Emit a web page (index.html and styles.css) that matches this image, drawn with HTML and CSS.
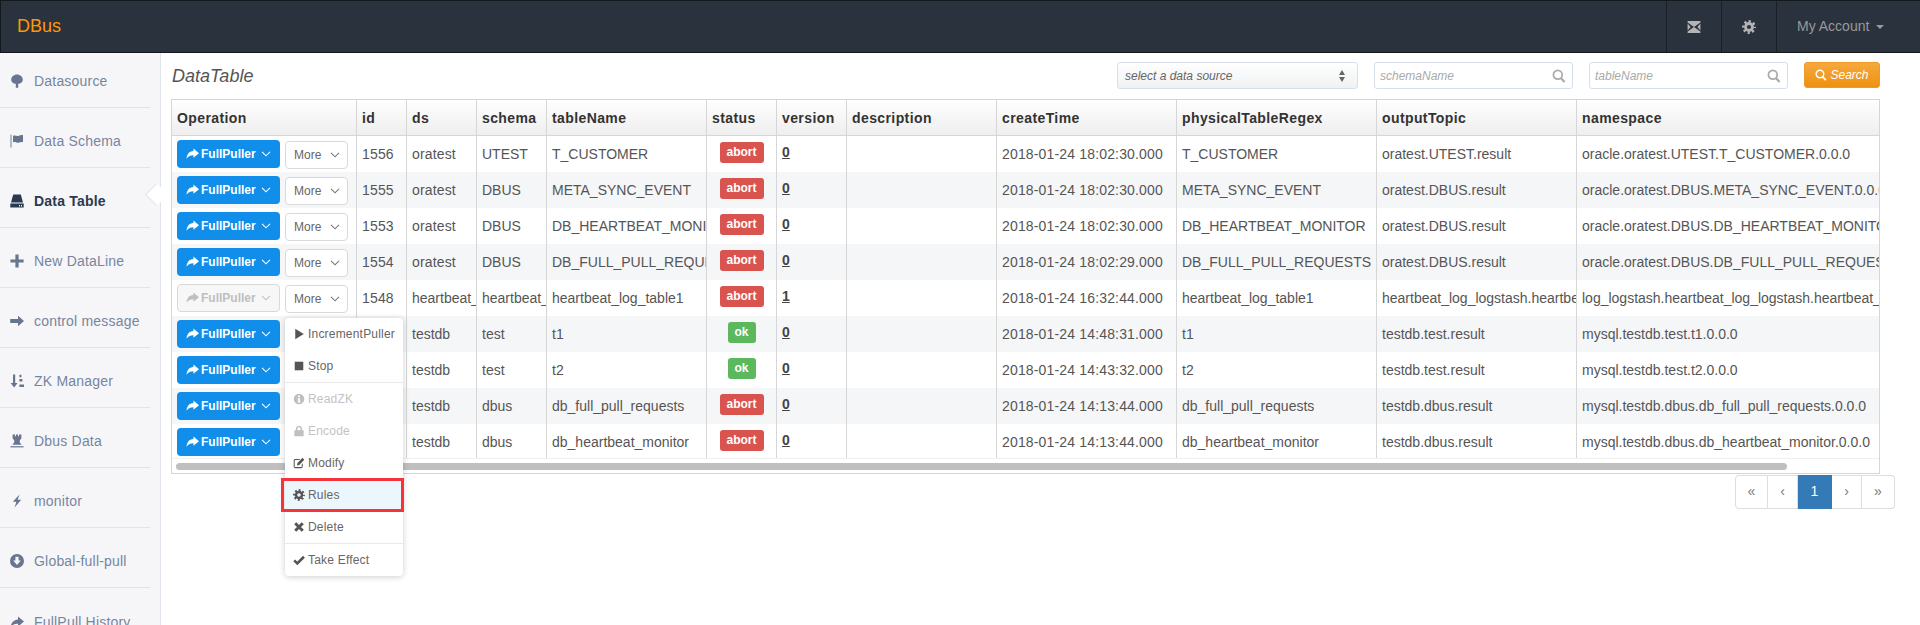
FILE: index.html
```html
<!DOCTYPE html>
<html lang="en">
<head>
<meta charset="utf-8">
<title>DBus - DataTable</title>
<link rel="stylesheet" href="styles.css">
</head>
<body>
<svg class="defs" xmlns="http://www.w3.org/2000/svg">
  <symbol id="i-tree" viewBox="0 0 14 14"><path d="M7 .4C10.2 .4 12.8 2.8 12.8 5.8 12.8 8.3 10.2 9.8 8.2 9.8V13.8H5.8V9.8C3.8 9.8 1.2 8.3 1.2 5.8 1.2 2.8 3.8 .4 7 .4Z"/></symbol>
  <symbol id="i-flag" viewBox="0 0 14 14"><rect x=".4" y=".6" width="1.2" height="13" opacity=".75"/><path d="M3 1.8C5 .6 7 2.6 9 1.8 10.5 1.2 11.5 1.1 13 1.1V8C10.8 8 8.5 9.2 6.5 8.4 5 7.8 4 7.9 3 8.4Z"/></symbol>
  <symbol id="i-hdd" viewBox="0 0 14 14"><path d="M3.2 .6H10.8L13 8.6H1Z"/><path fill-rule="evenodd" d="M.3 9.6H13.7V13.6H.3ZM9 11V12.4H10V11ZM11 11V12.4H12V11Z"/></symbol>
  <symbol id="i-plus" viewBox="0 0 14 14"><path d="M5.4.6H8.6V5.4H13.6V8.6H8.6V13.6H5.4V8.6H.4V5.4H5.4Z"/></symbol>
  <symbol id="i-arrow" viewBox="0 0 14 14"><path d="M8 1.8 14 7 8 12.2V9H.2V5H8Z"/></symbol>
  <symbol id="i-sort" viewBox="0 0 14 14"><path d="M3 .6H5.2V9H7.6L4.1 13.6.6 9H3Z"/><path d="M9.4 .8H11.4V3.2H9.4ZM9.4 5H12.4V7.4H9.4ZM9.4 10.4H14V13H9.4Z"/></symbol>
  <symbol id="i-tower" viewBox="0 0 14 14"><path d="M2.6.4H5V2.2H6V.4H8V2.2H9V.4H11.4V4.6L9.8 6.2V8.6L11.6 10.8H2.4L4.2 8.6V6.2L2.6 4.6Z"/><rect x=".4" y="12.2" width="13.2" height="1.2"/></symbol>
  <symbol id="i-flash" viewBox="0 0 14 14"><path d="M9.6.4 2.8 7.8H6.4L4.6 13.6 11.2 5.8H7.6Z"/></symbol>
  <symbol id="i-download" viewBox="0 0 14 14"><path fill-rule="evenodd" d="M7 0A7 7 0 1 0 7 14 7 7 0 0 0 7 0ZM5.4 2.8H8.6V6.6H10.8L7 11 3.2 6.6H5.4Z"/></symbol>
  <symbol id="i-share" viewBox="0 0 14 14"><path d="M8 1.6 14 6.6 8 11.6V8.8C5 8.8 2.6 9.4 .6 12.6 .8 8 3.4 4.6 8 4.4Z"/></symbol>
  <symbol id="i-mail" viewBox="0 0 14 14"><path d="M.6 1H13.4V2.4L7 7 .6 2.4ZM.6 13H13.4V11.6L7 7 .6 11.6Z"/><path d="M.6 3.4 3.6 6.9.6 10.6ZM13.4 3.4 10.4 6.9 13.4 10.6Z"/></symbol>
  <symbol id="i-cog" viewBox="0 0 14 14"><circle cx="7" cy="7" r="3.5" fill="none" stroke="currentColor" stroke-width="2.8"/><circle cx="7" cy="7" r="5.7" fill="none" stroke="currentColor" stroke-width="2.4" stroke-dasharray="2.24 2.24" stroke-dashoffset="1.1"/></symbol>
  <symbol id="i-play" viewBox="0 0 14 14"><path d="M2.6 1 12.6 7 2.6 13Z"/></symbol>
  <symbol id="i-stop" viewBox="0 0 14 14"><rect x="2" y="2" width="10" height="10"/></symbol>
  <symbol id="i-info" viewBox="0 0 14 14"><path fill-rule="evenodd" d="M7 .8A6.2 6.2 0 1 0 7 13.2 6.2 6.2 0 0 0 7 .8ZM5.9 3H8.1V5H5.9ZM5.4 6H8.1V9.8H8.8V11H5.4V9.8H6.1V7.2H5.4Z"/></symbol>
  <symbol id="i-lock" viewBox="0 0 14 14"><path fill-rule="evenodd" d="M7 .8C9.2 .8 10.6 2.4 10.6 4.6V6H12.4V13.2H1.6V6H3.4V4.6C3.4 2.4 4.8 .8 7 .8ZM5.2 6H8.8V4.6C8.8 3.4 8.1 2.6 7 2.6 5.9 2.6 5.2 3.4 5.2 4.6Z"/></symbol>
  <symbol id="i-edit" viewBox="0 0 14 14"><path d="M2.6 2.4H8.4L7.2 3.6H2.8C2.3 3.6 2 3.9 2 4.4V11C2 11.5 2.3 11.8 2.8 11.8H9.4C9.9 11.8 10.2 11.5 10.2 11V8.4L11.4 7.2V11.2C11.4 12.2 10.6 13 9.6 13H2.6C1.6 13 .8 12.2 .8 11.2V4.2C.8 3.2 1.6 2.4 2.6 2.4Z"/><path d="M11 1 13.2 3.2 7.4 9.2 4.6 9.8 5.2 7Z"/></symbol>
  <symbol id="i-remove" viewBox="0 0 14 14"><path d="M2.6 2.6 11.4 11.4M11.4 2.6 2.6 11.4" fill="none" stroke="currentColor" stroke-width="3.4"/></symbol>
  <symbol id="i-ok" viewBox="0 0 14 14"><path d="M1.4 7.4 5 11 12.8 3.2" fill="none" stroke="currentColor" stroke-width="3"/></symbol>
  <symbol id="i-search" viewBox="0 0 14 14"><circle cx="5.8" cy="5.8" r="4.4" fill="none" stroke="currentColor" stroke-width="1.7"/><path d="M8.8 9 12.6 13" fill="none" stroke="currentColor" stroke-width="2.2"/></symbol>
  <symbol id="i-down" viewBox="0 0 10 6"><path d="M1 .8 5 4.8 9 .8" fill="none" stroke="currentColor" stroke-width="1.1"/></symbol>
</svg>

<header class="topbar">
  <a class="brand">DBus</a>
  <div class="topbar-right">
    <div class="top-btn"><svg class="ic-14"><use href="#i-mail"/></svg></div>
    <div class="top-btn"><svg class="ic-14"><use href="#i-cog"/></svg></div>
    <div class="top-account">My Account <span class="caret"></span></div>
  </div>
</header>

<div class="page">
  <nav class="sidebar">
    <a class="nav-item"><svg class="nav-ic"><use href="#i-tree"/></svg>Datasource</a>
    <a class="nav-item"><svg class="nav-ic"><use href="#i-flag"/></svg>Data Schema</a>
    <a class="nav-item active"><svg class="nav-ic"><use href="#i-hdd"/></svg>Data Table</a>
    <a class="nav-item"><svg class="nav-ic"><use href="#i-plus"/></svg>New DataLine</a>
    <a class="nav-item"><svg class="nav-ic"><use href="#i-arrow"/></svg>control message</a>
    <a class="nav-item"><svg class="nav-ic"><use href="#i-sort"/></svg>ZK Manager</a>
    <a class="nav-item"><svg class="nav-ic"><use href="#i-tower"/></svg>Dbus Data</a>
    <a class="nav-item"><svg class="nav-ic"><use href="#i-flash"/></svg>monitor</a>
    <a class="nav-item"><svg class="nav-ic"><use href="#i-download"/></svg>Global-full-pull</a>
    <a class="nav-item"><svg class="nav-ic"><use href="#i-share"/></svg>FullPull History</a>
  </nav>

  <main class="main">
    <div class="toolbar">
      <h1 class="title">DataTable</h1>
      <div class="filters">
        <div class="select-box">
          <span>select a data source</span>
          <span class="updown"><i class="tri-up"></i><i class="tri-down"></i></span>
        </div>
        <label class="search-box"><input type="text" placeholder="schemaName"><svg class="ic-14"><use href="#i-search"/></svg></label>
        <label class="search-box"><input type="text" placeholder="tableName"><svg class="ic-14"><use href="#i-search"/></svg></label>
        <button class="search-btn"><svg class="ic-12"><use href="#i-search"/></svg>Search</button>
      </div>
    </div>

    <section class="table-wrap">
      <div class="table-clip">
        <table class="grid">
          <colgroup>
            <col class="c-op"><col class="c-id"><col class="c-ds"><col class="c-ds"><col class="c-name"><col class="c-ds"><col class="c-ds"><col class="c-desc"><col class="c-time"><col class="c-wide"><col class="c-wide"><col class="c-ns">
          </colgroup>
          <thead>
            <tr><th>Operation</th><th>id</th><th>ds</th><th>schema</th><th>tableName</th><th>status</th><th>version</th><th>description</th><th>createTime</th><th>physicalTableRegex</th><th>outputTopic</th><th>namespace</th></tr>
          </thead>
          <tbody>
            <tr>
              <td><div class="ops"><button class="pull"><svg class="ic-13"><use href="#i-share"/></svg>FullPuller<svg class="chev"><use href="#i-down"/></svg></button><button class="more">More<svg class="chev"><use href="#i-down"/></svg></button></div></td>
              <td class="num">1556</td><td class="num">oratest</td><td>UTEST</td><td>T_CUSTOMER</td><td class="st"><span class="badge abort">abort</span></td><td class="ver"><a>0</a></td><td></td><td class="num">2018-01-24 18:02:30.000</td><td>T_CUSTOMER</td><td>oratest.UTEST.result</td><td>oracle.oratest.UTEST.T_CUSTOMER.0.0.0</td>
            </tr>
            <tr>
              <td><div class="ops"><button class="pull"><svg class="ic-13"><use href="#i-share"/></svg>FullPuller<svg class="chev"><use href="#i-down"/></svg></button><button class="more">More<svg class="chev"><use href="#i-down"/></svg></button></div></td>
              <td class="num">1555</td><td class="num">oratest</td><td>DBUS</td><td>META_SYNC_EVENT</td><td class="st"><span class="badge abort">abort</span></td><td class="ver"><a>0</a></td><td></td><td class="num">2018-01-24 18:02:30.000</td><td>META_SYNC_EVENT</td><td>oratest.DBUS.result</td><td>oracle.oratest.DBUS.META_SYNC_EVENT.0.0.0</td>
            </tr>
            <tr>
              <td><div class="ops"><button class="pull"><svg class="ic-13"><use href="#i-share"/></svg>FullPuller<svg class="chev"><use href="#i-down"/></svg></button><button class="more">More<svg class="chev"><use href="#i-down"/></svg></button></div></td>
              <td class="num">1553</td><td class="num">oratest</td><td>DBUS</td><td>DB_HEARTBEAT_MONITOR</td><td class="st"><span class="badge abort">abort</span></td><td class="ver"><a>0</a></td><td></td><td class="num">2018-01-24 18:02:30.000</td><td>DB_HEARTBEAT_MONITOR</td><td>oratest.DBUS.result</td><td>oracle.oratest.DBUS.DB_HEARTBEAT_MONITOR.0.0.0</td>
            </tr>
            <tr>
              <td><div class="ops"><button class="pull"><svg class="ic-13"><use href="#i-share"/></svg>FullPuller<svg class="chev"><use href="#i-down"/></svg></button><button class="more">More<svg class="chev"><use href="#i-down"/></svg></button></div></td>
              <td class="num">1554</td><td class="num">oratest</td><td>DBUS</td><td>DB_FULL_PULL_REQUESTS</td><td class="st"><span class="badge abort">abort</span></td><td class="ver"><a>0</a></td><td></td><td class="num">2018-01-24 18:02:29.000</td><td>DB_FULL_PULL_REQUESTS</td><td>oratest.DBUS.result</td><td>oracle.oratest.DBUS.DB_FULL_PULL_REQUESTS.0.0.0</td>
            </tr>
            <tr>
              <td><div class="ops"><button class="pull disabled"><svg class="ic-13"><use href="#i-share"/></svg>FullPuller<svg class="chev"><use href="#i-down"/></svg></button><button class="more">More<svg class="chev"><use href="#i-down"/></svg></button></div></td>
              <td class="num">1548</td><td>heartbeat_log</td><td>heartbeat_log</td><td>heartbeat_log_table1</td><td class="st"><span class="badge abort">abort</span></td><td class="ver"><a>1</a></td><td></td><td class="num">2018-01-24 16:32:44.000</td><td>heartbeat_log_table1</td><td>heartbeat_log_logstash.heartbeat_log_logstash.result</td><td>log_logstash.heartbeat_log_logstash.heartbeat_log_logstash.0.0.0</td>
            </tr>
            <tr>
              <td><div class="ops"><button class="pull"><svg class="ic-13"><use href="#i-share"/></svg>FullPuller<svg class="chev"><use href="#i-down"/></svg></button><button class="more">More<svg class="chev"><use href="#i-down"/></svg></button></div></td>
              <td class="num">1547</td><td>testdb</td><td>test</td><td>t1</td><td class="st"><span class="badge ok">ok</span></td><td class="ver"><a>0</a></td><td></td><td class="num">2018-01-24 14:48:31.000</td><td>t1</td><td>testdb.test.result</td><td>mysql.testdb.test.t1.0.0.0</td>
            </tr>
            <tr>
              <td><div class="ops"><button class="pull"><svg class="ic-13"><use href="#i-share"/></svg>FullPuller<svg class="chev"><use href="#i-down"/></svg></button><button class="more">More<svg class="chev"><use href="#i-down"/></svg></button></div></td>
              <td class="num">1546</td><td>testdb</td><td>test</td><td>t2</td><td class="st"><span class="badge ok">ok</span></td><td class="ver"><a>0</a></td><td></td><td class="num">2018-01-24 14:43:32.000</td><td>t2</td><td>testdb.test.result</td><td>mysql.testdb.test.t2.0.0.0</td>
            </tr>
            <tr>
              <td><div class="ops"><button class="pull"><svg class="ic-13"><use href="#i-share"/></svg>FullPuller<svg class="chev"><use href="#i-down"/></svg></button><button class="more">More<svg class="chev"><use href="#i-down"/></svg></button></div></td>
              <td class="num">1545</td><td>testdb</td><td>dbus</td><td>db_full_pull_requests</td><td class="st"><span class="badge abort">abort</span></td><td class="ver"><a>0</a></td><td></td><td class="num">2018-01-24 14:13:44.000</td><td>db_full_pull_requests</td><td>testdb.dbus.result</td><td>mysql.testdb.dbus.db_full_pull_requests.0.0.0</td>
            </tr>
            <tr>
              <td><div class="ops"><button class="pull"><svg class="ic-13"><use href="#i-share"/></svg>FullPuller<svg class="chev"><use href="#i-down"/></svg></button><button class="more">More<svg class="chev"><use href="#i-down"/></svg></button></div></td>
              <td class="num">1544</td><td>testdb</td><td>dbus</td><td>db_heartbeat_monitor</td><td class="st"><span class="badge abort">abort</span></td><td class="ver"><a>0</a></td><td></td><td class="num">2018-01-24 14:13:44.000</td><td>db_heartbeat_monitor</td><td>testdb.dbus.result</td><td>mysql.testdb.dbus.db_heartbeat_monitor.0.0.0</td>
            </tr>
          </tbody>
        </table>
      </div>
      <div class="hscroll"><div class="hscroll-thumb"></div></div>
    </section>

    <ul class="pager">
      <li>«</li><li>‹</li><li class="current">1</li><li>›</li><li>»</li>
    </ul>

    <ul class="menu">
      <li class="mi"><svg class="mi-ic"><use href="#i-play"/></svg>IncrementPuller</li>
      <li class="mi"><svg class="mi-ic"><use href="#i-stop"/></svg>Stop</li>
      <li class="mi-div"></li>
      <li class="mi off"><svg class="mi-ic"><use href="#i-info"/></svg>ReadZK</li>
      <li class="mi off"><svg class="mi-ic"><use href="#i-lock"/></svg>Encode</li>
      <li class="mi"><svg class="mi-ic"><use href="#i-edit"/></svg>Modify</li>
      <li class="mi hot"><svg class="mi-ic"><use href="#i-cog"/></svg>Rules</li>
      <li class="mi"><svg class="mi-ic"><use href="#i-remove"/></svg>Delete</li>
      <li class="mi-div"></li>
      <li class="mi"><svg class="mi-ic"><use href="#i-ok"/></svg>Take Effect</li>
    </ul>
  </main>
</div>
</body>
</html>
```
FILE: styles.css
```css
* { box-sizing: border-box; }
html, body { margin: 0; padding: 0; height: 100%; overflow: hidden; background: #fff; }
body { font-family: "Liberation Sans", Arial, sans-serif; font-size: 14px; color: #555; }
svg { fill: currentColor; display: block; flex: none; }
.defs { width: 0; height: 0; position: absolute; }
ul { list-style: none; margin: 0; padding: 0; }
button { font-family: inherit; cursor: pointer; }

.ic-14 { width: 14px; height: 14px; }
.ic-13 { width: 13px; height: 13px; }
.ic-12 { width: 12px; height: 12px; }

/* top bar */
.topbar { height: 53px; background: #2a323d; border: 1px solid #14181d; border-right: 0; display: flex; align-items: stretch; justify-content: space-between; }
.brand { color: #ff9800; font-size: 18px; line-height: 51px; padding-left: 16px; }
.topbar-right { display: flex; align-items: stretch; }
.top-btn { width: 55px; border-left: 1px solid #1a1f26; display: flex; align-items: center; justify-content: center; color: #b4b4b4; }
.top-account { width: 144px; border-left: 1px solid #1a1f26; color: #999; padding-left: 20px; line-height: 51px; white-space: nowrap; }
.caret { display: inline-block; width: 0; height: 0; margin-left: 3px; vertical-align: middle; border-top: 4px solid #999; border-left: 4px solid transparent; border-right: 4px solid transparent; }

/* layout */
.page { display: flex; height: 572px; overflow: hidden; }
.sidebar { width: 161px; flex: none; background: #f6f6f9; border-right: 1px solid #dfe4ec; height: 100%; }
.main { flex: 1; position: relative; padding: 0 40px 0 10px; min-width: 0; }

/* sidebar */
.nav-item { position: relative; width: 150px; height: 60px; display: flex; align-items: flex-end; padding: 0 0 17px 10px; border-bottom: 1px solid #dfe3ea; color: #76859f; letter-spacing: .2px; line-height: 17px; white-space: nowrap; }
.nav-item:first-child { height: 55px; }
.nav-item:last-child { border-bottom: 0; }
.nav-ic { width: 14px; height: 14px; margin: 0 10px 2px 0; color: #67758e; }
.nav-item.active { color: #2b3950; font-weight: bold; }
.nav-item.active .nav-ic { color: #2b3950; }
.nav-item.active::after { content: ""; position: absolute; right: -15px; top: 18px; width: 16px; height: 16px; background: #fff; border-left: 1px solid #dfe4ec; border-bottom: 1px solid #dfe4ec; transform: rotate(45deg) scale(.95); }

/* toolbar */
.toolbar { height: 46px; display: flex; justify-content: space-between; align-items: flex-start; padding-top: 9px; }
.title { margin: 3px 0 0 1px; font-size: 18px; font-style: italic; font-weight: normal; line-height: 22px; color: #555; }
.filters { display: flex; align-items: flex-start; font-size: 12px; font-style: italic; color: #666; }
.select-box { width: 241px; height: 27px; margin-right: 16px; border: 1px solid #d5e0ea; border-radius: 3px; background: linear-gradient(#fff, #eff1f3); display: flex; align-items: center; justify-content: space-between; padding: 0 12px 0 7px; }
.updown { display: flex; flex-direction: column; gap: 2px; }
.tri-up { border-bottom: 5px solid #666; border-left: 3px solid transparent; border-right: 3px solid transparent; }
.tri-down { border-top: 5px solid #666; border-left: 3px solid transparent; border-right: 3px solid transparent; }
.search-box { width: 199px; height: 27px; margin-right: 16px; border: 1px solid #d5e0ea; border-radius: 3px; background: #fff; display: flex; align-items: center; padding: 0 6px 0 5px; color: #aaa; }
.search-box input { flex: 1; min-width: 0; border: 0; outline: 0; padding: 0; background: none; font: italic 12px "Liberation Sans", Arial, sans-serif; color: #666; }
.search-box input::placeholder { color: #aaa; opacity: 1; }
.search-btn { width: 76px; height: 26px; border: 1px solid #eb9a2c; border-radius: 3px; background: linear-gradient(#f6a93c, #ee9012); color: #fff; font-style: italic; font-size: 12px; display: flex; align-items: center; justify-content: center; gap: 3px; padding: 0; }

/* table */
.table-wrap { border: 1px solid #d6d6d6; height: 375px; }
.table-clip { height: 358px; overflow: hidden; }
.grid { border-collapse: separate; border-spacing: 0; table-layout: fixed; width: 1802px; }
.c-op { width: 184px; } .c-id { width: 50px; } .c-ds { width: 70px; } .c-name { width: 160px; }
.c-desc { width: 150px; } .c-time { width: 180px; } .c-wide { width: 200px; } .c-ns { width: 398px; }
.grid th, .grid td { height: 36px; padding: 0 2px 0 5px; white-space: nowrap; overflow: hidden; text-align: left; border-left: 1px solid #d6d6d6; }
.grid th:first-child, .grid td:first-child { border-left: 0; padding-left: 5px; }
.grid th { background: linear-gradient(#fff, #eee); border-bottom: 1px solid #d6d6d6; color: #333; font-weight: bold; letter-spacing: .4px; }
.grid td { color: #555; }
.grid td.num { letter-spacing: .16px; }
.grid tbody tr:nth-child(even) td { background: #f5f6f8; }
.ops { display: flex; align-items: flex-start; gap: 5px; }
.pull { width: 103px; height: 28px; border: 0; border-radius: 4px; background: #108ee9; color: #fff; font-size: 12px; font-weight: bold; display: flex; align-items: center; padding: 0 0 0 9px; }
.pull .ic-13 { margin-right: 2px; }
.pull .chev { margin-left: 5px; }
.pull.disabled { background: #f7f7f7; border: 1px solid #d9d9d9; color: #bfbfbf; padding-left: 8px; }
.more { width: 63px; height: 28px; margin-top: 1px; border: 1px solid #d9d9d9; border-radius: 4px; background: #fff; color: #666; font-size: 12px; display: flex; align-items: center; padding: 0 0 0 8px; }
.more .chev { margin-left: 9px; color: #777; }
.chev { width: 10px; height: 6px; }
.grid td.st { text-align: center; padding: 0; }
.badge { display: inline-block; height: 21px; line-height: 20px; border-radius: 3px; color: #fff; font-size: 12px; font-weight: bold; position: relative; top: -2px; }
.badge.abort { width: 44px; background: #d9534f; }
.badge.ok { width: 28px; background: #5cb85c; }
.ver a { color: #444; font-weight: bold; text-decoration: underline; position: relative; top: -2px; }
.hscroll { height: 15px; padding: 4px 0 0 4px; border-top: 1px solid #f0f0f0; }
.hscroll-thumb { width: 1611px; height: 7px; border-radius: 4px; background: #bfbfbf; }

/* pager */
.pager { display: flex; justify-content: flex-end; margin: 1px -15px 0 0; height: 34px; }
.pager li { height: 34px; width: 30px; border: 1px solid #ddd; border-left: 0; color: #777; line-height: 31px; text-align: center; background: #fff; }
.pager li:first-child { width: 33px; border-left: 1px solid #ddd; border-radius: 4px 0 0 4px; }
.pager li:last-child { width: 33px; border-radius: 0 4px 4px 0; }
.pager .current { width: 34px; background: #337ab7; border-color: #337ab7; color: #fff; }

/* dropdown overlay */
.menu { position: absolute; left: 124px; top: 265px; width: 118px; height: 258px; padding: 0; background: #fff; border-radius: 4px; box-shadow: 0 1px 6px rgba(0, 0, 0, .2); font-size: 12px; color: #666; }
.mi { position: relative; height: 32px; display: flex; align-items: center; padding-left: 8px; white-space: nowrap; letter-spacing: .2px; }
.mi-ic { width: 12px; height: 12px; margin-right: 3px; color: #555; }
.mi-div { height: 1px; background: #e9e9e9; margin: 0; }
.mi.off { color: #c3c3c3; }
.mi.off .mi-ic { color: #bfbfbf; }
.mi.hot { background: #ecf6fd; height: 28px; margin: 2px 0; }
.mi.hot::after { content: ""; position: absolute; left: -4px; right: -1px; top: -3px; bottom: -3px; border: 3px solid #f5333b; }
```
